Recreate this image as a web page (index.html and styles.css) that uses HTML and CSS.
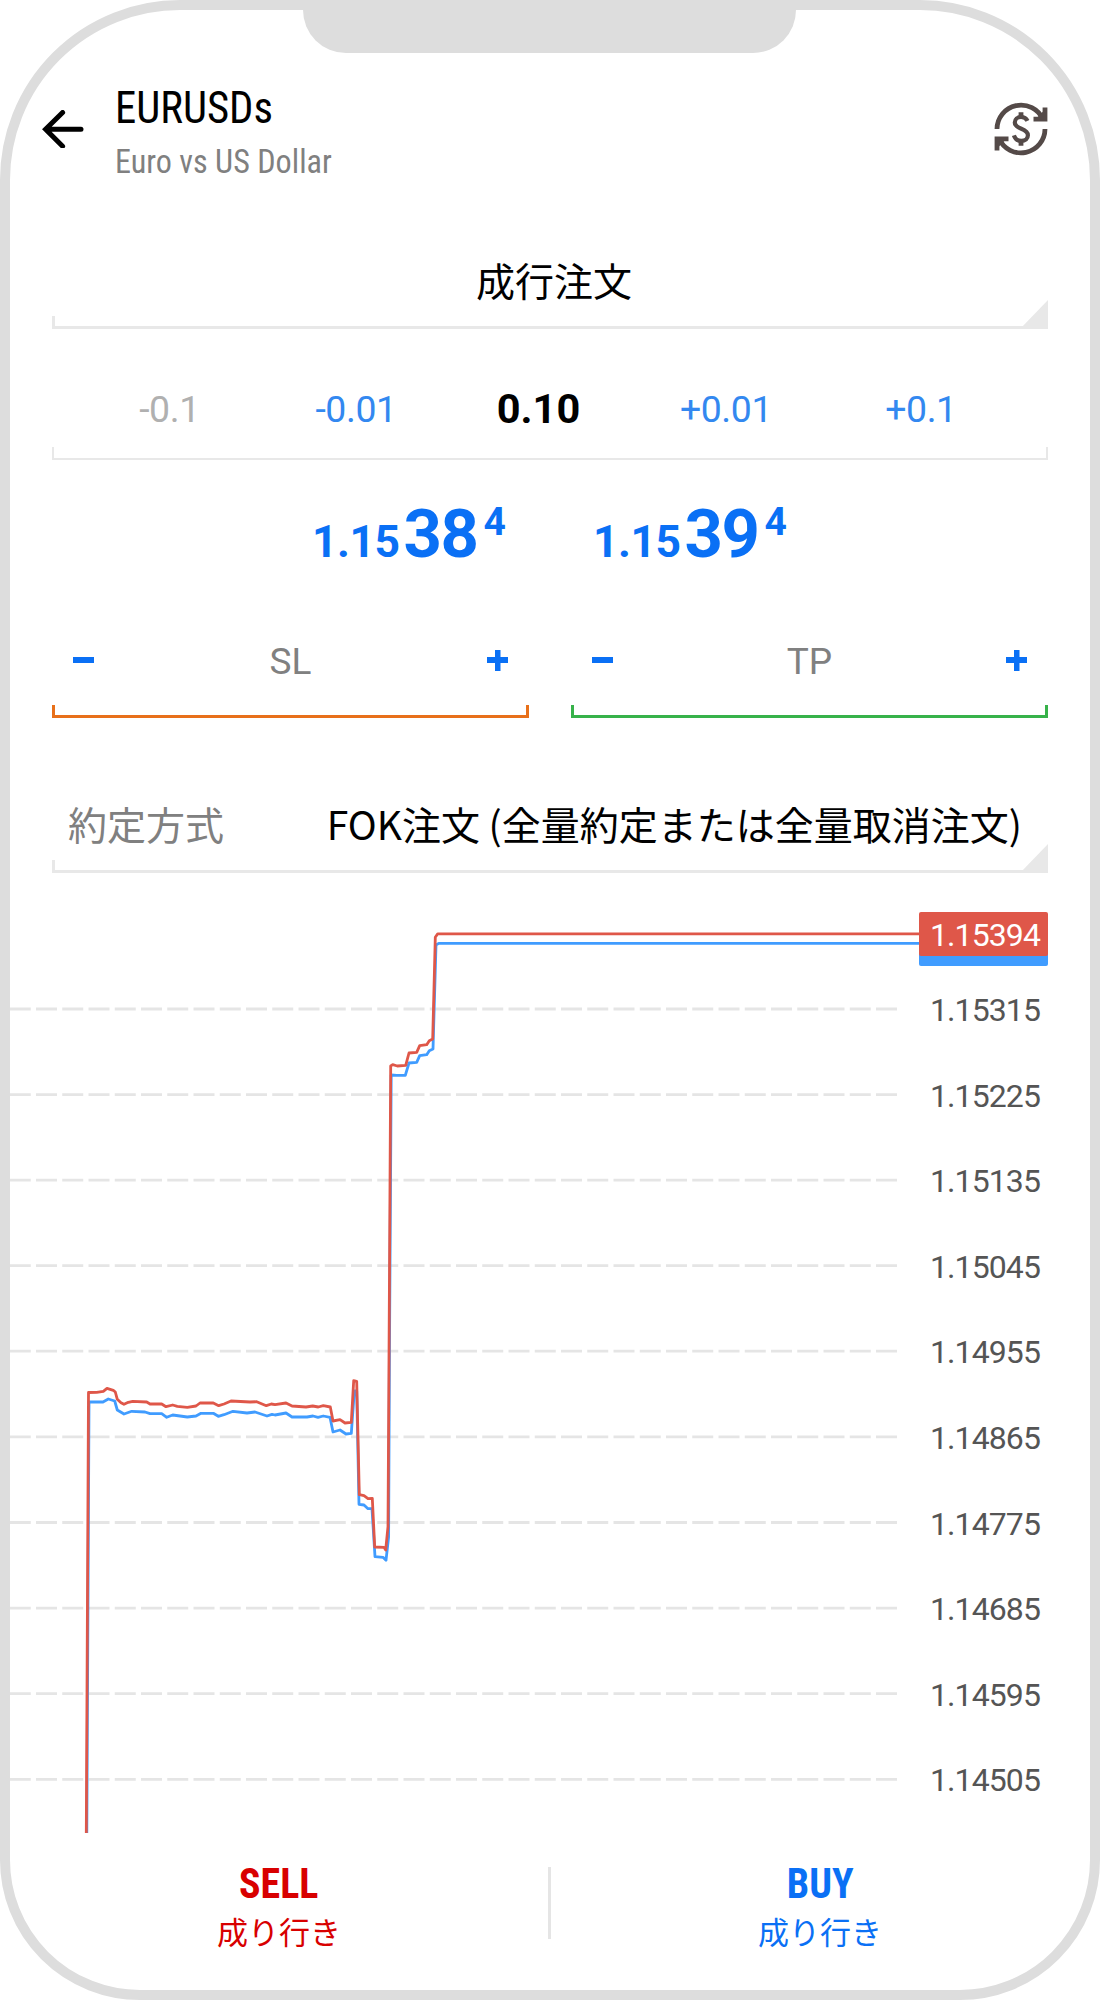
FILE: index.html
```html
<!DOCTYPE html>
<html lang="ja">
<head>
    <meta charset="UTF-8">
    <meta name="viewport" content="width=device-width, initial-scale=1.0">
    <title>EURUSDs</title>
    <link rel="stylesheet" href="styles.css">
</head>
<body>
    <div class="phone">
        <div class="notch"></div>

        <header class="header">
            <svg class="back" width="44" height="38" viewBox="41 110 44 38">
                <path d="M62.6 112.5L45.6 129.3L62.6 146.2M46 129.3H81" fill="none" stroke="#000" stroke-width="5" stroke-linecap="round"/>
            </svg>
            <div class="titles">
                <h1 class="symbol"><span class="narrow">EURUSDs</span></h1>
                <p class="description"><span class="narrow">Euro vs US Dollar</span></p>
            </div>
            <svg class="exchange" width="54" height="54" viewBox="994.5 102.5 54 54">
                <g fill="none" stroke="#544a48" stroke-width="4.8">
                    <path d="M997.5 129.5A24 24 0 0 1 1043.4 119.8"/>
                    <path d="M1045.5 108V119.7H1034"/>
                    <path d="M1045.5 129.5A24 24 0 0 1 999.6 139.2"/>
                    <path d="M997.5 151V139.3H1009"/>
                    <path d="M1028 121.4C1026.8 118.9 1024.4 117.5 1021.6 117.5C1018 117.5 1015.3 119.8 1015.3 123C1015.3 126.5 1018.2 127.8 1021.8 129.2C1025.6 130.7 1028.4 132.2 1028.4 135.7C1028.4 139 1025.6 141.4 1021.8 141.4C1018.4 141.4 1015.6 139.4 1014.4 135.8" stroke-width="4.2"/>
                    <path d="M1021.5 112.8V118M1021.5 141V146.2"/>
                </g>
                <path d="M1036 119.7L1045.5 110V119.7ZM1007 139.3L997.5 149V139.3Z" fill="#544a48"/>
            </svg>
        </header>

        <div class="select order-type">
            <span>成行注文</span>
        </div>

        <div class="volume">
            <span class="disabled">-0.1</span>
            <span>-0.01</span>
            <strong>0.10</strong>
            <span>+0.01</span>
            <span>+0.1</span>
        </div>

        <div class="prices">
            <div class="price">1.15<span class="big">38</span><span class="pip">4</span></div>
            <div class="price">1.15<span class="big">39</span><span class="pip">4</span></div>
        </div>

        <div class="limits">
            <div class="limit sl">
                <i class="minus"></i>
                <span>SL</span>
                <i class="plus"></i>
            </div>
            <div class="limit tp">
                <i class="minus"></i>
                <span>TP</span>
                <i class="plus"></i>
            </div>
        </div>

        <div class="select filling">
            <span class="label">約定方式</span>
            <span>FOK注文 (全量約定または全量取消注文)</span>
        </div>

        <svg class="chart" width="1080" height="960" viewBox="10 880 1080 960">
            <!-- grid -->
            <g stroke="#e5e5e5" stroke-width="2.8" stroke-dasharray="21 5.25">
                <path d="M9.75 1009H898"/>
                <path d="M9.75 1094.6H898"/>
                <path d="M9.75 1180.1H898"/>
                <path d="M9.75 1265.7H898"/>
                <path d="M9.75 1351.2H898"/>
                <path d="M9.75 1436.8H898"/>
                <path d="M9.75 1522.5H898"/>
                <path d="M9.75 1608.1H898"/>
                <path d="M9.75 1693.7H898"/>
                <path d="M9.75 1779.3H898"/>
            </g>
            <!-- bid -->
            <polyline class="line" stroke="#409cff" points="86.8,1833 89,1402 103,1402 108.3,1399 114.7,1401 117.3,1410 124,1414 131.7,1411.3 145,1412 150,1413.7 161.7,1413.7 166.7,1417.3 172.7,1415 187.3,1417 196,1416 201,1413.3 213.3,1413.3 218.3,1416.3 224,1414.7 233,1411.3 247,1413 255,1412 267,1416 272,1414.3 275,1415 286,1413 292,1417 307,1417 313,1416 318,1417.3 323.3,1416 330,1417.3 333,1432 340,1430 346,1434 351.3,1433.3 354.3,1391 356.7,1391 359,1504.3 364,1505 368,1508.7 372,1508.7 375,1556.7 383,1557.3 386,1560.3 388.6,1537 389.4,1360 391.2,1075 396.7,1075.3 405.3,1075.3 409,1063 416.7,1062.3 419.7,1055.7 426.7,1054.7 429.3,1050.7 433,1049 436,945 438.7,943.4 920,943.4"/>
            <!-- ask -->
            <polyline class="line" stroke="#df5749" points="86.3,1833 88.5,1392.5 96.7,1392.3 103.3,1391.3 107,1388.3 113.3,1390.3 115.3,1392 117.3,1399.3 121,1402.7 124,1404.3 128.3,1402.3 132.7,1401.3 146.7,1402 150,1404 161.7,1404 166,1406.7 172.7,1405 177.3,1406.3 187.3,1407.3 196,1406 200,1403 213.3,1403 218.7,1405.7 224,1404 231,1401 250,1402 256.7,1401.7 266.3,1405.7 271.3,1404 275,1404.7 286,1403 292,1406 306,1407 312.7,1406 318.3,1407 323.3,1405.7 330.3,1407 333,1421 340,1419.7 345,1423 351.3,1422.3 353.7,1380.7 356.7,1381.3 359.3,1494.7 364,1495.7 368,1498.7 372.3,1498.3 374.7,1547 384,1547.3 385.7,1550 388,1526.7 389,1360 390.7,1066 392.7,1064.7 397.3,1066 405.7,1065.3 409,1053 416.7,1052.3 419.7,1045.7 426.7,1044.7 429.3,1040.7 432.7,1039 435.3,937.3 437.7,933.8 920,933.8"/>
            <!-- price tags -->
            <g class="axis tags">
                <rect x="919" y="922" width="129" height="44" rx="2" fill="#409cff"/>
                <rect x="919" y="912" width="129" height="44" rx="2" fill="#df5749"/>
                <text x="1040" y="946">1.15394</text>
            </g>
            <g class="axis">
                <text x="1040" y="1021">1.15315</text>
                <text x="1040" y="1107">1.15225</text>
                <text x="1040" y="1192">1.15135</text>
                <text x="1040" y="1278">1.15045</text>
                <text x="1040" y="1363">1.14955</text>
                <text x="1040" y="1449">1.14865</text>
                <text x="1040" y="1535">1.14775</text>
                <text x="1040" y="1620">1.14685</text>
                <text x="1040" y="1706">1.14595</text>
                <text x="1040" y="1791">1.14505</text>
            </g>
        </svg>

        <footer class="actions">
            <div class="action sell">
                <b><span class="narrow">SELL</span></b>
                <small>成り行き</small>
            </div>
            <div class="divider"></div>
            <div class="action buy">
                <b><span class="narrow">BUY</span></b>
                <small>成り行き</small>
            </div>
        </footer>
    </div>
</body>
</html>
```
FILE: styles.css
```css
* {
    box-sizing: border-box;
}
body {
    margin: 0;
    background-color: #fff;
    font-family: Roboto, "Noto Sans CJK JP", sans-serif;
}
.phone {
    position: relative;
    width: 1100px;
    height: 2000px;
    border: 10px solid #ddd;
    border-radius: 180px 180px 140px 140px;
    background-color: #fff;
    overflow: hidden;
}
.notch {
    width: 493px;
    height: 43px;
    margin-left: 293px;
    border-radius: 0 0 45px 45px;
    background-color: #ddd;
}
.narrow {
    display: inline-block;
    font-stretch: 75%;
    transform-origin: left center;
}

/* header */
.header {
    display: flex;
    align-items: flex-start;
    height: 200px;
    padding: 23px 42px 0 31px;
}
.back {
    margin-top: 34px;
}
.titles {
    flex: 1;
    margin: 1px 0 0 30px;
}
.symbol {
    margin: 0;
    font-size: 45px;
    font-weight: 400;
    line-height: 62px;
}
.symbol .narrow {
    transform: scaleX(0.95);
}
.description {
    margin: 0;
    font-size: 33px;
    line-height: 46px;
    color: #808080;
}
.description .narrow {
    transform: scaleX(0.975);
}
.exchange {
    margin-top: 26px;
}

/* underlined selects with a corner mark */
.select {
    position: relative;
    display: flex;
    width: 996px;
    margin-left: 42px;
    border-bottom: 3px solid #e8e8e8;
    font-family: "Noto Sans CJK JP", sans-serif;
    font-size: 39px;
    line-height: 58px;
}
.select::before {
    content: "";
    position: absolute;
    left: 0;
    bottom: 0;
    width: 3px;
    height: 10px;
    background-color: #e8e8e8;
}
.select::after {
    content: "";
    position: absolute;
    right: 0;
    bottom: -3px;
    width: 28px;
    height: 29px;
    background-color: #e8e8e8;
    clip-path: polygon(100% 0, 100% 100%, 0 100%);
}
.order-type {
    height: 76px;
    justify-content: center;
    padding-left: 8px;
    line-height: 52px;
}

/* volume */
.volume {
    position: relative;
    display: grid;
    grid-template-columns: 235px 138px 227px 148px 242px;
    align-items: start;
    width: 996px;
    height: 131px;
    margin-left: 42px;
    padding-top: 52px;
    border-bottom: 2px solid #e8e8e8;
    font-size: 37.4px;
    letter-spacing: -0.4px;
    line-height: 56px;
    text-align: center;
    color: #3388f0;
}
.volume::before {
    content: "";
    position: absolute;
    left: 0;
    right: 0;
    bottom: 0;
    height: 11px;
    border: solid #e8e8e8;
    border-width: 0 2px;
}
.volume .disabled {
    color: #b0b0b0;
}
.volume strong {
    font-size: 41.5px;
    letter-spacing: 0;
    color: #000;
}

/* prices */
.prices {
    display: flex;
    height: 165px;
    padding: 34px 0 0 302px;
}
.price {
    width: 281px;
    font-size: 44.5px;
    font-weight: 700;
    line-height: 80px;
    letter-spacing: -0.5px;
    color: #0a70f5;
    white-space: nowrap;
}
.price .big {
    margin-left: 4px;
    font-size: 67px;
    letter-spacing: -1.5px;
}
.price .pip {
    position: relative;
    top: -22px;
    margin-left: 6px;
    font-size: 39px;
}

/* SL / TP */
.limits {
    display: flex;
    gap: 42px;
    margin-left: 42px;
}
.limit {
    position: relative;
    display: flex;
    justify-content: space-between;
    align-items: center;
    width: 477px;
    height: 93px;
    padding: 0 21px 20px;
    border-bottom: 3px solid;
}
.limit::before {
    content: "";
    position: absolute;
    left: 0;
    right: 0;
    bottom: 0;
    height: 10px;
    border: solid;
    border-width: 0 3px;
    border-color: inherit;
}
.limit span {
    padding-top: 3px;
    font-size: 37px;
    line-height: 50px;
    color: #808080;
}
.sl {
    border-color: #e8701a;
}
.tp {
    border-color: #37b24a;
}
.minus,
.plus {
    width: 21px;
    height: 21px;
    background: linear-gradient(#0a70f5, #0a70f5) center / 21px 6px no-repeat;
}
.plus {
    background: linear-gradient(#0a70f5, #0a70f5) center / 21px 6px no-repeat, linear-gradient(#0a70f5, #0a70f5) center / 5.5px 21px no-repeat;
}

/* filling mode */
.filling {
    height: 79px;
    margin-top: 76px;
    justify-content: space-between;
    padding: 0 26px 0 16px;
}
.filling .label {
    color: #808080;
}

/* chart */
.chart {
    display: block;
    margin-top: 7px;
}
.line {
    fill: none;
    stroke-width: 2.8;
    stroke-linejoin: round;
}
.axis {
    font-size: 32px;
    letter-spacing: -0.9px;
    text-anchor: end;
    fill: #555;
}
.tags {
    fill: #fff;
}

/* bottom buttons */
.actions {
    display: flex;
    padding-top: 17px;
}
.action {
    display: flex;
    flex-direction: column;
    align-items: center;
    width: 538px;
    margin-top: -3px;
}
.action b {
    font-size: 42px;
    line-height: 59px;
}
.action .narrow {
    transform: scaleX(0.95);
    transform-origin: center;
}
.action small {
    font-family: "Noto Sans CJK JP", sans-serif;
    font-size: 31px;
    line-height: 36px;
}
.sell {
    color: #d80000;
}
.buy {
    color: #0a70f5;
}
.divider {
    width: 3px;
    height: 72px;
    margin-top: 10px;
    background-color: #e5e5e5;
}
```
